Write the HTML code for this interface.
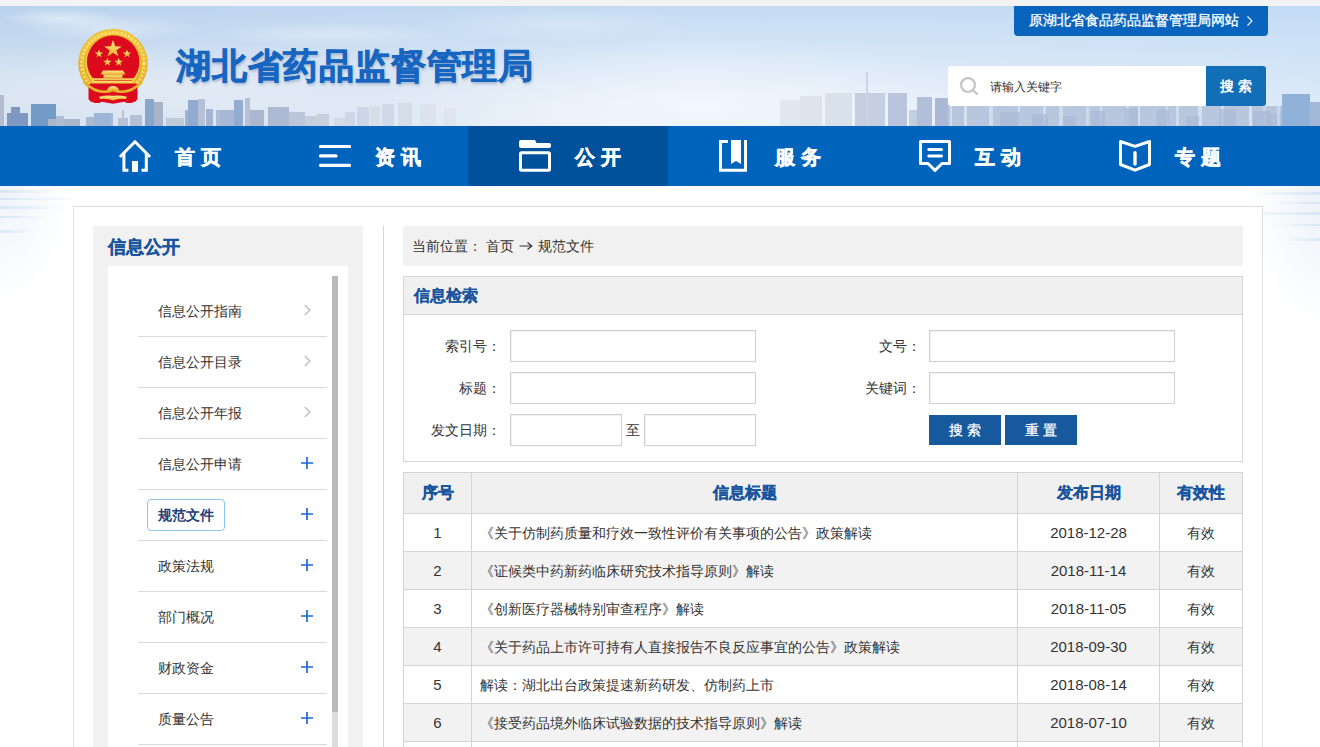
<!DOCTYPE html>
<html><head><meta charset="utf-8">
<style>
*{margin:0;padding:0;box-sizing:border-box}
html,body{width:1320px;height:747px;overflow:hidden;background:#fff;font-family:"Liberation Sans",sans-serif;color:#333}
.abs{position:absolute}
#topstrip{left:0;top:0;width:1320px;height:6px;background:#f4f3f3}
#header{left:0;top:6px;width:1320px;height:120px;overflow:hidden;
 background:linear-gradient(180deg,#c4dbf3 0%,#cfe2f6 25%,#dbe8f6 55%,#e4edf7 80%,#e8eff8 100%)}
#nav{left:0;top:126px;width:1320px;height:60px;background:#0064bc}
.ni{position:absolute;top:0;width:200px;height:60px}
.ni svg{position:absolute;left:51px;top:14px;width:32px;height:32px}
.ni span{position:absolute;left:107px;top:1px;line-height:60px;font-size:20px;font-weight:bold;color:#fff;letter-spacing:6px;-webkit-text-stroke:0.5px #fff}
.on{background:#00519b}
#bgwrap{left:0;top:186px;width:1320px;height:561px;background:radial-gradient(ellipse 70px 120px at 0px 0px,rgba(205,220,238,.35),rgba(255,255,255,0)),radial-gradient(ellipse 70px 140px at 1320px 0px,rgba(205,220,238,.4),rgba(255,255,255,0)),#fff}
#main{left:73px;top:206px;width:1190px;height:600px;border:1px solid #dcdcdc;background:#fff}
#side{left:93px;top:226px;width:270px;height:540px;background:#f1f1f1}
#sidetitle{left:108px;top:232px;font-size:18px;font-weight:bold;color:#18559e;line-height:30px;-webkit-text-stroke:0.3px #18559e}
#sidelist{left:108px;top:266px;width:240px;height:500px;background:#fff}
#scroll{left:332px;top:276px;width:6px;height:436px;background:#b9b9b9}
#track{left:332px;top:712px;width:6px;height:40px;background:#dcdcdc}
.li{position:absolute;left:138px;width:189px;height:51px;border-bottom:1px solid #d9d9d9}
.li span{position:absolute;left:20px;top:0;line-height:50px;font-size:14px;color:#333}
.li i{position:absolute;left:164px;top:19px;width:12px;height:12px}
#vsep{left:383px;top:226px;width:1px;height:530px;background:#d8d8d8}
#crumb{left:403px;top:226px;width:840px;height:40px;background:#f1f1f1;border-radius:2px;font-size:14px;line-height:40px;padding-left:9px;color:#333}
#sbox{left:403px;top:276px;width:840px;height:186px;border:1px solid #d6d6d6;background:#fff}
#shead{left:404px;top:277px;width:838px;height:38px;background:#f0f0f0;border-bottom:1px solid #d6d6d6}
#shead b{position:absolute;left:10px;top:0;line-height:37px;font-size:16px;color:#18559e;-webkit-text-stroke:0.15px #18559e}
.lab{position:absolute;font-size:14px;color:#333;text-align:right;width:120px;line-height:32px}
.inp{position:absolute;height:32px;border:1px solid #cfcfcf;background:#fff;box-shadow:inset 1px 1px 1px rgba(0,0,0,.06)}
.btn{position:absolute;top:415px;width:72px;height:30px;background:#165a9d;color:#fff;font-size:14px;line-height:32px;text-align:center;letter-spacing:4px;text-indent:4px;-webkit-text-stroke:0.25px #fff;line-height:31px}
#tbl{left:403px;top:472px;width:840px;border-collapse:collapse;font-size:14px}
#tbl td,#tbl th{border:1px solid #d4d4d4;height:38px;text-align:center;color:#333;font-weight:normal}
#tbl th{height:41px;background:#f0f0f0;color:#18559e;font-weight:bold;font-size:16px;-webkit-text-stroke:0.3px #18559e}
#tbl tr:nth-child(odd) td{background:#f2f2f2}
#tbl td.t{text-align:left;padding-left:8px;padding-top:2px}
#tbl td.v{padding-top:2px}
#tbl td.d,#tbl td.n{font-size:15px}

#sitetitle{left:176px;top:37px;font-size:34.5px;line-height:58px;font-weight:bold;color:#1565c1;-webkit-text-stroke:0.7px #1565c1;text-shadow:1px 2px 3px rgba(40,70,120,.35);letter-spacing:0.8px}
#oldlink{left:1014px;top:6px;width:254px;height:30px;background:#0964bd;border-radius:0 0 4px 4px;color:#fff;font-size:14px;line-height:29px;padding-left:15px;-webkit-text-stroke:0.3px #fff}
#sinput{left:948px;top:66px;width:258px;height:40px;background:#fff;border-radius:3px 0 0 3px}
#sinput span{position:absolute;left:42px;top:1px;line-height:40px;font-size:12px;color:#333}
#sbtn{left:1206px;top:66px;width:60px;height:40px;background:#126eb6;border-radius:0 3px 3px 0;color:#fff;font-size:14px;font-weight:bold;line-height:40px;text-align:center;letter-spacing:4px;text-indent:4px}
.li span.act{left:9px;top:9px;width:78px;height:32px;line-height:30px;border:1px solid #8fc6ee;border-radius:4px;text-align:center;font-weight:bold;color:#1d3f78}
</style></head><body>
<div id="topstrip" class="abs"></div>
<div id="header" class="abs">
<div class="abs" style="left:0;top:0;width:1320px;height:120px;background:radial-gradient(ellipse 420px 45px at 160px 80px,rgba(238,242,247,.55),rgba(238,242,247,0)),radial-gradient(ellipse 60px 10px at 60px 12px,rgba(240,245,250,.6),rgba(255,255,255,0)),radial-gradient(ellipse 90px 14px at 110px 22px,rgba(235,242,250,.55),rgba(255,255,255,0)),radial-gradient(ellipse 120px 12px at 330px 28px,rgba(235,242,250,.5),rgba(255,255,255,0)),radial-gradient(ellipse 140px 18px at 560px 18px,rgba(235,242,250,.35),rgba(255,255,255,0)),radial-gradient(ellipse 320px 70px at 700px 100px,rgba(245,250,255,.75),rgba(255,255,255,0)),linear-gradient(90deg,rgba(150,180,215,.22) 0%,rgba(150,180,215,.1) 30%,rgba(150,180,215,0) 50%,rgba(200,230,255,0) 70%,rgba(190,222,250,.25) 100%)"></div>
<svg class="abs" style="left:0;top:0" width="1320" height="120"><rect x="0" y="89" width="4" height="31" fill="#b4bccf"/><rect x="7" y="107" width="21" height="13" fill="#7f98c1"/><rect x="11" y="101" width="9" height="19" fill="#7f98c1"/><rect x="31" y="98" width="25" height="22" fill="#729bc8"/><rect x="48" y="113" width="32" height="7" fill="#a9b7cc"/><rect x="56" y="110" width="8" height="10" fill="#b1bdd0"/><rect x="94" y="107" width="17" height="13" fill="#9db6d7"/><rect x="86" y="111" width="8" height="9" fill="#aab9d0"/><rect x="110" y="107" width="3" height="13" fill="#a4b8d8"/><rect x="118" y="112" width="10" height="8" fill="#b6c2d6"/><rect x="122" y="104" width="2" height="16" fill="#b6c2d6"/><rect x="130" y="109" width="12" height="11" fill="#b4c0d6"/><rect x="145" y="93" width="9" height="27" fill="#8aa6cc"/><rect x="154" y="96" width="9" height="24" fill="#a8b4cc"/><rect x="166" y="112" width="18" height="8" fill="#c0cadb"/><rect x="185" y="104" width="3" height="16" fill="#9fb3d3"/><rect x="188" y="94" width="10" height="26" fill="#90aad0"/><rect x="198" y="93" width="7" height="27" fill="#b6c0d6"/><rect x="206" y="103" width="7" height="17" fill="#a4b6d4"/><rect x="216" y="104" width="4" height="16" fill="#aebcd6"/><rect x="220" y="104" width="14" height="16" fill="#a8b8d4"/><rect x="234" y="94" width="9" height="26" fill="#94acd0"/><rect x="245" y="92" width="5" height="28" fill="#b8c0d4"/><rect x="250" y="104" width="14" height="16" fill="#acb8d0"/><rect x="268" y="101" width="21" height="19" fill="#adbad4"/><rect x="289" y="106" width="16" height="14" fill="#bcc6da"/><rect x="305" y="110" width="12" height="10" fill="#c5cedf"/><rect x="317" y="108" width="12" height="12" fill="#c8d0e0"/><rect x="334" y="112" width="12" height="8" fill="#d3dbe8"/><rect x="345" y="106" width="10" height="14" fill="#cfd8e7"/><rect x="357" y="101" width="12" height="19" fill="#ccd6e6"/><rect x="370" y="100" width="10" height="20" fill="#d6deea"/><rect x="382" y="98" width="12" height="22" fill="#d0d9e8"/><rect x="398" y="97" width="14" height="23" fill="#d5dde9"/><rect x="420" y="98" width="16" height="22" fill="#dce3ee"/><rect x="444" y="102" width="12" height="18" fill="#dee5ef"/><rect x="780" y="94" width="20" height="26" fill="#e2e8f1"/><rect x="800" y="90" width="22" height="30" fill="#dde4ee"/><rect x="825" y="87" width="27" height="33" fill="#d9e1ec"/><rect x="855" y="87" width="30" height="33" fill="#c6cfe1"/><rect x="866" y="66" width="2" height="54" fill="#ccd4e4"/><rect x="888" y="87" width="19" height="33" fill="#b9c5dd"/><rect x="909" y="104" width="8" height="16" fill="#c4cee1"/><rect x="917" y="91" width="15" height="29" fill="#b2bfd9"/><rect x="935" y="92" width="22" height="28" fill="#abb9d6"/><rect x="957" y="100" width="10" height="20" fill="#b6c2db"/><rect x="967" y="103" width="13" height="17" fill="#b1bfd9"/><rect x="980" y="104" width="12" height="16" fill="#b4c1da"/><rect x="948" y="100" width="334" height="20" fill="#b9c7de"/><rect x="1282" y="88" width="28" height="32" fill="#90b1d8"/><rect x="1268" y="107" width="14" height="13" fill="#b0bfda"/><rect x="1310" y="96" width="10" height="24" fill="#a3b8d6"/><rect x="950" y="100" width="2" height="20" fill="#dfe7f3" opacity="0.64"/><rect x="964" y="100" width="3" height="20" fill="#dfe7f3" opacity="0.77"/><rect x="989" y="100" width="4" height="20" fill="#dfe7f3" opacity="0.63"/><rect x="1018" y="100" width="2" height="20" fill="#dfe7f3" opacity="0.76"/><rect x="1043" y="100" width="3" height="20" fill="#dfe7f3" opacity="0.62"/><rect x="1059" y="100" width="4" height="20" fill="#dfe7f3" opacity="0.59"/><rect x="1086" y="100" width="3" height="20" fill="#dfe7f3" opacity="0.56"/><rect x="1100" y="100" width="2" height="20" fill="#dfe7f3" opacity="0.65"/><rect x="1126" y="100" width="3" height="20" fill="#dfe7f3" opacity="0.70"/><rect x="1138" y="100" width="2" height="20" fill="#dfe7f3" opacity="0.70"/><rect x="1166" y="100" width="2" height="20" fill="#dfe7f3" opacity="0.52"/><rect x="1176" y="100" width="3" height="20" fill="#dfe7f3" opacity="0.59"/><rect x="1198" y="100" width="4" height="20" fill="#dfe7f3" opacity="0.72"/><rect x="1221" y="100" width="3" height="20" fill="#dfe7f3" opacity="0.69"/><rect x="1249" y="100" width="3" height="20" fill="#dfe7f3" opacity="0.79"/><rect x="1263" y="100" width="3" height="20" fill="#dfe7f3" opacity="0.44"/><rect x="1277" y="100" width="3" height="20" fill="#dfe7f3" opacity="0.49"/><rect x="1000" y="106" width="20" height="14" fill="#a9b9d6" opacity=".7"/><rect x="1032" y="108" width="16" height="12" fill="#a9b9d6" opacity=".7"/><rect x="1063" y="110" width="13" height="10" fill="#a9b9d6" opacity=".7"/><rect x="1091" y="105" width="14" height="15" fill="#a9b9d6" opacity=".7"/><rect x="1125" y="102" width="13" height="18" fill="#a9b9d6" opacity=".7"/><rect x="1157" y="104" width="12" height="16" fill="#a9b9d6" opacity=".7"/><rect x="1186" y="110" width="13" height="10" fill="#a9b9d6" opacity=".7"/><rect x="1219" y="103" width="17" height="17" fill="#a9b9d6" opacity=".7"/><rect x="1253" y="105" width="18" height="15" fill="#a9b9d6" opacity=".7"/></svg>
</div>
<svg class="abs" style="left:76px;top:27px" width="74" height="80" viewBox="76 27 74 80">
<defs>
<radialGradient id="gold" cx="50%" cy="45%" r="55%"><stop offset="0.7" stop-color="#f6d049"/><stop offset="1" stop-color="#e0a71a"/></radialGradient>
<linearGradient id="gold2" x1="0" y1="0" x2="0" y2="1"><stop offset="0" stop-color="#fbe58a"/><stop offset="1" stop-color="#e9b526"/></linearGradient>
</defs>
<circle cx="113" cy="63.5" r="34.8" fill="url(#gold)"/>
<circle cx="113" cy="63.5" r="31.5" fill="none" stroke="#fae9a0" stroke-width="3" stroke-dasharray="1.5 2.5" opacity=".8"/>
<circle cx="113" cy="63.5" r="28.3" fill="none" stroke="#dca322" stroke-width="1"/>
<circle cx="113.2" cy="61.8" r="26.3" fill="#db0a1c"/>
<path d="M88.5 84.5 L95 82 H131 L137.5 84.5 V99 L135.5 101.5 L131 103 H126.5 L124.5 101.8 L113 103.8 L101.5 101.8 L99.5 103 H95 L90.5 101.5 L88.5 99 Z" fill="#db0a1c"/>
<g fill="url(#gold2)">
<path d="M113 40 L115.2 46.3 L121.8 46.4 L116.5 50.3 L118.4 56.6 L113 52.8 L107.6 56.6 L109.5 50.3 L104.2 46.4 L110.8 46.3 Z"/>
<path d="M99 49.5 L100.1 52.4 L103.2 52.5 L100.7 54.4 L101.6 57.4 L99 55.6 L96.4 57.4 L97.3 54.4 L94.8 52.5 L97.9 52.4 Z"/>
<path d="M127 49.5 L128.1 52.4 L131.2 52.5 L128.7 54.4 L129.6 57.4 L127 55.6 L124.4 57.4 L125.3 54.4 L122.8 52.5 L125.9 52.4 Z"/>
<path d="M107.4 57.8 L108.5 60.7 L111.6 60.8 L109.1 62.7 L110 65.7 L107.4 63.9 L104.8 65.7 L105.7 62.7 L103.2 60.8 L106.3 60.7 Z"/>
<path d="M118.7 57.8 L119.8 60.7 L122.9 60.8 L120.4 62.7 L121.3 65.7 L118.7 63.9 L116.1 65.7 L117 62.7 L114.5 60.8 L117.6 60.7 Z"/>
<path d="M103 70.5 H123 L125.5 74.5 H100.5 Z"/><rect x="103.5" y="74.5" width="19" height="3.5"/>
<rect x="93" y="78.3" width="40.5" height="2.2"/><rect x="92" y="81" width="42" height="2.6"/>
<path d="M107 91 A6 5 0 0 1 119 91 Z"/>
<path d="M99 96.8 Q106 95 113 95.8 Q120 95 127 96.8 L126 99 Q119 97.8 113 100.5 Q107 97.8 100 99 Z"/>
</g>
<path d="M84 82 Q98 96 113 90 Q128 96 142 82" fill="none" stroke="#e7b22a" stroke-width="2.6"/>
</svg>
<div class="abs" id="sitetitle">湖北省药品监督管理局</div>
<div class="abs" id="oldlink">原湖北省食品药品监督管理局网站<svg width="8" height="12" viewBox="0 0 8 12" style="position:absolute;left:232px;top:9px"><path d="M1.5 1.5 L6 6 L1.5 10.5" fill="none" stroke="#fff" stroke-width="1.1"/></svg></div>
<div class="abs" id="sinput"><svg width="22" height="22" viewBox="0 0 22 22" style="position:absolute;left:10px;top:10px"><circle cx="10" cy="9" r="6.9" fill="none" stroke="#c6c6c6" stroke-width="2.3"/><path d="M15 14 L19 18" stroke="#c6c6c6" stroke-width="2.4" stroke-linecap="round"/></svg><span>请输入关键字</span></div><div class="abs" id="sbtn">搜索</div>
<div id="nav" class="abs">
 <div class="ni" style="left:68px"><svg viewBox="0 0 32 32"><path d="M1.8 16 L16 1.8 L30.2 16" fill="none" stroke="#fff" stroke-width="3" stroke-linecap="round" stroke-linejoin="miter"/><path d="M4.9 13 V30.3 H9.4 M27.3 13 V30.3 H22.5" fill="none" stroke="#fff" stroke-width="3"/><rect x="13" y="21" width="6" height="11" fill="#fff"/></svg><span>首页</span></div>
 <div class="ni" style="left:268px"><svg viewBox="0 0 32 32"><path d="M1.5 6.5 H30.5 M1.5 15.9 H17 M1.5 25.4 H30.5" fill="none" stroke="#fff" stroke-width="3.2" stroke-linecap="round"/></svg><span>资讯</span></div>
 <div class="ni on" style="left:468px"><svg viewBox="0 0 32 32"><path d="M2 0 H16 L17.6 3 H30 Q32 3 32 5 V6 Q32 8 30 8 H2 Q0 8 0 6 V2 Q0 0 2 0 Z" fill="#fff"/><rect x="1.5" y="12.8" width="29" height="17.5" rx="1" fill="none" stroke="#fff" stroke-width="3"/></svg><span>公开</span></div>
 <div class="ni" style="left:668px"><svg viewBox="0 0 32 32"><path d="M9 1.5 H1.5 V30.3 H26.5 V0" fill="none" stroke="#fff" stroke-width="3"/><path d="M12 0 H22 V24 L17 21 L12 24 Z" fill="#fff"/></svg><span>服务</span></div>
 <div class="ni" style="left:868px"><svg viewBox="0 0 32 32"><path d="M1.5 1.5 H30.5 V23.5 H23 L16 30.3 L9 23.5 H1.5 Z" fill="none" stroke="#fff" stroke-width="3" stroke-linejoin="round"/><path d="M9.8 9.5 H22.5 M9.8 15.9 H22.5" fill="none" stroke="#fff" stroke-width="3" stroke-linecap="round"/></svg><span>互动</span></div>
 <div class="ni" style="left:1068px"><svg viewBox="0 0 32 32"><path d="M1.5 1.5 L16 6.3 L30.5 1.5 V24.5 L16 30.2 L1.5 24.5 Z" fill="none" stroke="#fff" stroke-width="3" stroke-linejoin="round"/><path d="M16 12.8 V24" fill="none" stroke="#fff" stroke-width="3.4" stroke-linecap="round"/></svg><span>专题</span></div>
</div>
<div id="bgwrap" class="abs"></div>
<svg class="abs" style="left:0;top:186px" width="1320" height="160">
<defs><linearGradient id="fl" x1="0" x2="1"><stop offset="0" stop-color="#c5d8ee" stop-opacity=".5"/><stop offset="1" stop-color="#c5d8ee" stop-opacity="0"/></linearGradient>
<linearGradient id="fr" x1="1" x2="0"><stop offset="0" stop-color="#c5d8ee" stop-opacity=".5"/><stop offset="1" stop-color="#c5d8ee" stop-opacity="0"/></linearGradient></defs>
<rect x="0" y="4" width="55" height="3" fill="url(#fl)"/><rect x="0" y="12" width="80" height="2" fill="url(#fl)"/><rect x="0" y="20" width="65" height="3" fill="url(#fl)"/><rect x="0" y="30" width="45" height="2" fill="url(#fl)"/><rect x="0" y="44" width="35" height="3" fill="url(#fl)"/>
<rect x="1250" y="6" width="70" height="3" fill="url(#fr)"/><rect x="1270" y="16" width="50" height="2" fill="url(#fr)"/><rect x="1240" y="26" width="80" height="3" fill="url(#fr)"/><rect x="1275" y="38" width="45" height="2" fill="url(#fr)"/><rect x="1285" y="52" width="35" height="3" fill="url(#fr)"/>
</svg>
<div id="main" class="abs"></div>
<div id="side" class="abs"></div>
<div id="sidetitle" class="abs">信息公开</div>
<div id="sidelist" class="abs"></div>
<div id="scroll" class="abs"></div><div id="track" class="abs"></div>
<div class="li" style="top:286px"><span>信息公开指南</span><i style="top:16px"><svg width="12" height="14" viewBox="0 0 12 14"><path d="M2.8 3 L7.8 8 L2.8 13" fill="none" stroke="#c4c4c4" stroke-width="1.7"/></svg></i></div>
<div class="li" style="top:337px"><span>信息公开目录</span><i style="top:16px"><svg width="12" height="14" viewBox="0 0 12 14"><path d="M2.8 3 L7.8 8 L2.8 13" fill="none" stroke="#c4c4c4" stroke-width="1.7"/></svg></i></div>
<div class="li" style="top:388px"><span>信息公开年报</span><i style="top:16px"><svg width="12" height="14" viewBox="0 0 12 14"><path d="M2.8 3 L7.8 8 L2.8 13" fill="none" stroke="#c4c4c4" stroke-width="1.7"/></svg></i></div>
<div class="li" style="top:439px"><span>信息公开申请</span><i style="top:16px;left:163px"><svg width="12" height="12" viewBox="0 0 12 12"><path d="M0 6 H12 M6 0 V12" fill="none" stroke="#1a69d6" stroke-width="1.7"/></svg></i></div>
<div class="li" style="top:490px"><span class="act">规范文件</span><i style="top:16px;left:163px"><svg width="12" height="12" viewBox="0 0 12 12"><path d="M0 6 H12 M6 0 V12" fill="none" stroke="#1a69d6" stroke-width="1.7"/></svg></i></div>
<div class="li" style="top:541px"><span>政策法规</span><i style="top:16px;left:163px"><svg width="12" height="12" viewBox="0 0 12 12"><path d="M0 6 H12 M6 0 V12" fill="none" stroke="#1a69d6" stroke-width="1.7"/></svg></i></div>
<div class="li" style="top:592px"><span>部门概况</span><i style="top:16px;left:163px"><svg width="12" height="12" viewBox="0 0 12 12"><path d="M0 6 H12 M6 0 V12" fill="none" stroke="#1a69d6" stroke-width="1.7"/></svg></i></div>
<div class="li" style="top:643px"><span>财政资金</span><i style="top:16px;left:163px"><svg width="12" height="12" viewBox="0 0 12 12"><path d="M0 6 H12 M6 0 V12" fill="none" stroke="#1a69d6" stroke-width="1.7"/></svg></i></div>
<div class="li" style="top:694px"><span>质量公告</span><i style="top:16px;left:163px"><svg width="12" height="12" viewBox="0 0 12 12"><path d="M0 6 H12 M6 0 V12" fill="none" stroke="#1a69d6" stroke-width="1.7"/></svg></i></div>
<div class="li" style="top:745px"><span>统计数据</span><i style="top:16px;left:163px"><svg width="12" height="12" viewBox="0 0 12 12"><path d="M0 6 H12 M6 0 V12" fill="none" stroke="#1a69d6" stroke-width="1.7"/></svg></i></div>
<div id="vsep" class="abs"></div>
<div id="crumb" class="abs">当前位置： 首页 <svg width="14" height="10" viewBox="0 0 14 10" style="vertical-align:0px;margin:0 1px"><path d="M0.5 5 H12.5 M8.5 1.5 L12.8 5 L8.5 8.5" fill="none" stroke="#333" stroke-width="1.2"/></svg> 规范文件</div>
<div id="sbox" class="abs"></div>
<div id="shead" class="abs"><b>信息检索</b></div>

<div class="lab" style="left:381px;top:330px">索引号：</div><div class="inp" style="left:510px;top:330px;width:246px"></div>
<div class="lab" style="left:381px;top:372px">标题：</div><div class="inp" style="left:510px;top:372px;width:246px"></div>
<div class="lab" style="left:381px;top:414px">发文日期：</div><div class="inp" style="left:510px;top:414px;width:112px"></div>
<div class="abs" style="left:626px;top:414px;line-height:32px;font-size:14px">至</div><div class="inp" style="left:644px;top:414px;width:112px"></div>
<div class="lab" style="left:801px;top:330px">文号：</div><div class="inp" style="left:929px;top:330px;width:246px"></div>
<div class="lab" style="left:801px;top:372px">关键词：</div><div class="inp" style="left:929px;top:372px;width:246px"></div>
<div class="btn" style="left:929px">搜索</div><div class="btn" style="left:1005px">重置</div>
<table id="tbl" class="abs"><tr><th style="width:68px">序号</th><th style="width:546px">信息标题</th><th style="width:142px">发布日期</th><th>有效性</th></tr>
<tr><td class="n">1</td><td class="t">《关于仿制药质量和疗效一致性评价有关事项的公告》政策解读</td><td class="d">2018-12-28</td><td class="v">有效</td></tr>
<tr><td class="n">2</td><td class="t">《证候类中药新药临床研究技术指导原则》解读</td><td class="d">2018-11-14</td><td class="v">有效</td></tr>
<tr><td class="n">3</td><td class="t">《创新医疗器械特别审查程序》解读</td><td class="d">2018-11-05</td><td class="v">有效</td></tr>
<tr><td class="n">4</td><td class="t">《关于药品上市许可持有人直接报告不良反应事宜的公告》政策解读</td><td class="d">2018-09-30</td><td class="v">有效</td></tr>
<tr><td class="n">5</td><td class="t">解读：湖北出台政策提速新药研发、仿制药上市</td><td class="d">2018-08-14</td><td class="v">有效</td></tr>
<tr><td class="n">6</td><td class="t">《接受药品境外临床试验数据的技术指导原则》解读</td><td class="d">2018-07-10</td><td class="v">有效</td></tr>
<tr><td class="n">7</td><td class="t">《关于调整进口药品注册管理有关事项的决定》解读</td><td class="d">2018-07-06</td><td class="v">有效</td></tr>
</table>
</body></html>
